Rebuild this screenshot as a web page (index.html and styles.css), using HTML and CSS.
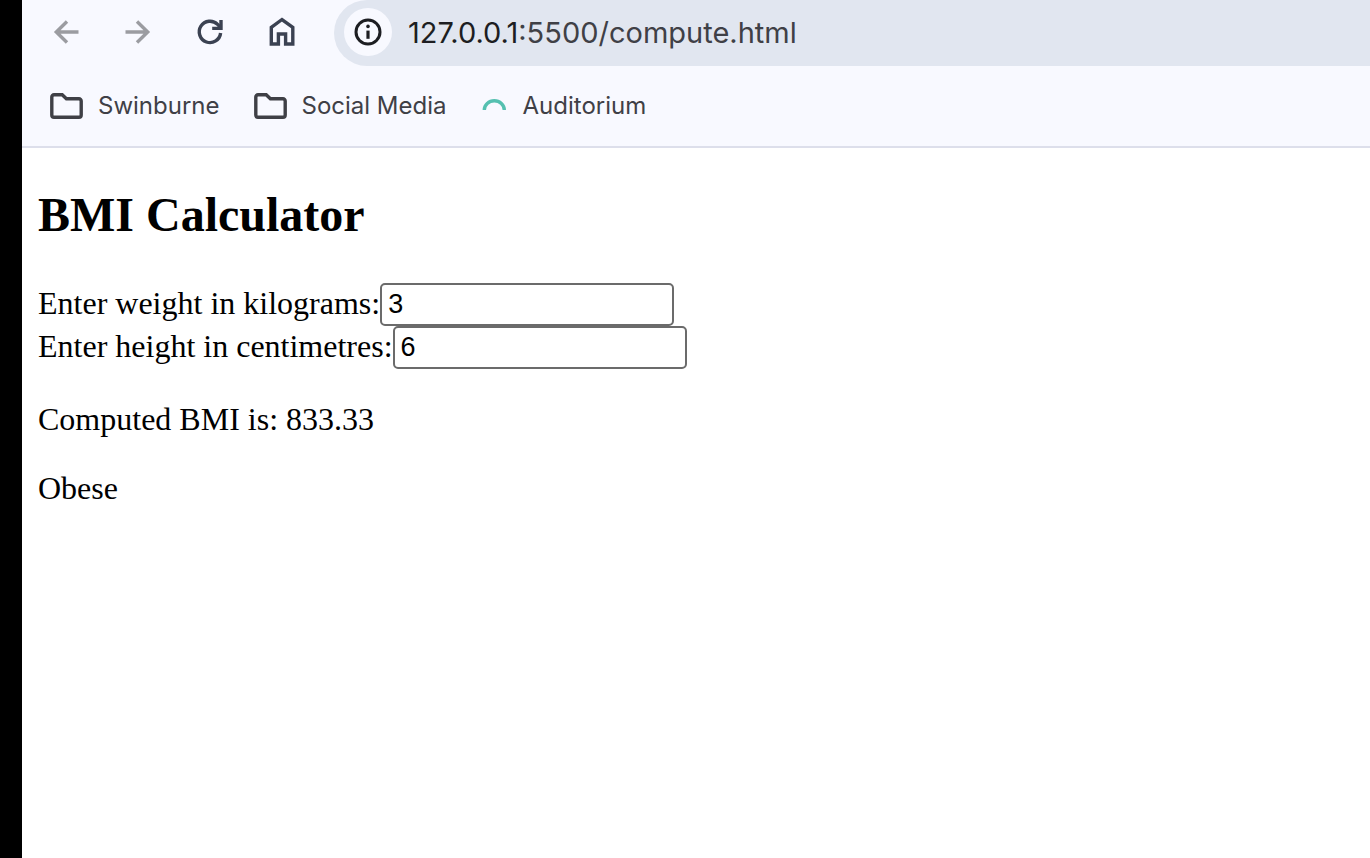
FILE: index.html
```html
<!DOCTYPE html>
<html lang="en">
<head>
<meta charset="utf-8">
<title>BMI Calculator</title>
<link rel="stylesheet" href="styles.css">
</head>
<body>
<div class="window">
  <header class="chrome">
    <div class="toolbar">
      <nav class="nav" aria-label="Browser">
        <button class="nav-button muted" type="button" aria-label="Back">
          <svg viewBox="0 0 32 32"><path d="M28.5 16H6M17 5.5L6.3 16 17 26.5"/></svg>
        </button>
        <button class="nav-button muted" type="button" aria-label="Forward">
          <svg viewBox="0 0 32 32"><path d="M3.5 16H26M15 5.5L25.7 16 15 26.5"/></svg>
        </button>
        <button class="nav-button" type="button" aria-label="Reload">
          <svg viewBox="0 0 32 32"><path d="M26.6 17A10.7 10.7 0 1 1 23.6 8.4L27 12"/><path d="M27 4v8.4H18.2"/></svg>
        </button>
        <button class="nav-button" type="button" aria-label="Home">
          <svg viewBox="0 0 32 32"><path d="M5.3 28V11.3L16 3.5l10.8 7.8V28h-7.2V18h-7.2v10z"/></svg>
        </button>
      </nav>
      <div class="address">
        <button class="site-info" type="button" aria-label="Site information">
          <svg viewBox="0 0 32 32"><circle cx="16" cy="16" r="12" fill="none" stroke="currentColor" stroke-width="3"/><circle cx="16" cy="10.4" r="1.8"/><path d="M14.4 14.6h3.2v8.2h-3.2z"/></svg>
        </button>
        <a class="url" href="#"><span class="host">127.0.0.1</span>:5500/compute.html</a>
      </div>
    </div>
    <nav class="bookmarks" aria-label="Bookmarks">
      <button class="bookmark" type="button">
        <svg class="folder" viewBox="0 0 34 28"><path d="M4 2.7h8.2l4.2 4H29a2.2 2.2 0 0 1 2.2 2.2V23a2.2 2.2 0 0 1-2.2 2.2H4A2.2 2.2 0 0 1 1.8 23V4.9A2.2 2.2 0 0 1 4 2.7z"/></svg>
        <span>Swinburne</span>
      </button>
      <button class="bookmark" type="button">
        <svg class="folder" viewBox="0 0 34 28"><path d="M4 2.7h8.2l4.2 4H29a2.2 2.2 0 0 1 2.2 2.2V23a2.2 2.2 0 0 1-2.2 2.2H4A2.2 2.2 0 0 1 1.8 23V4.9A2.2 2.2 0 0 1 4 2.7z"/></svg>
        <span>Social Media</span>
      </button>
      <a class="bookmark" href="#">
        <svg class="arc" viewBox="0 0 28 24"><path d="M3.3 16a10 9.2 0 0 1 20 0"/></svg>
        <span>Auditorium</span>
      </a>
    </nav>
  </header>
  <main class="page">
    <h1 class="title">BMI Calculator</h1>
    <form class="form">
      <div class="field"><label for="weight">Enter weight in kilograms:</label><input id="weight" type="text" value="3"></div>
      <div class="field"><label for="height">Enter height in centimetres:</label><input id="height" type="text" value="6"></div>
    </form>
    <p class="result">Computed BMI is: 833.33</p>
    <p class="result">Obese</p>
  </main>
</div>
</body>
</html>
```
FILE: styles.css
```css
* {
  box-sizing: border-box;
}

body {
  margin: 0;
  background: #fff;
}

.window {
  min-height: 100vh;
  border-left: 22px solid #000;
}

.chrome {
  background: #f8f9ff;
  border-bottom: 2px solid #dddfeb;
  font-family: Inter, sans-serif;
  color: #3f4046;
}

button {
  padding: 0;
  border: 0;
  background: none;
  font: inherit;
  color: inherit;
}

a {
  color: inherit;
  text-decoration: none;
}

.toolbar {
  display: flex;
  gap: 36px;
  padding-left: 28px;
  height: 66px;
}

.nav {
  display: flex;
  gap: 40px;
  padding-top: 16px;
}

.nav-button {
  width: 32px;
  height: 32px;
  color: #3b4252;
}

.nav-button.muted {
  color: #9b9ca1;
}

.nav-button svg {
  display: block;
  fill: none;
  stroke: currentColor;
  stroke-width: 3.4;
}

.address {
  flex: 1;
  display: flex;
  align-items: center;
  gap: 16px;
  padding: 0 0 2px 10px;
  background: #e1e6f0;
  border-radius: 34px 0 0 34px;
}

.site-info {
  display: grid;
  place-items: center;
  width: 48px;
  height: 48px;
  border-radius: 50%;
  background: #f8f9ff;
  color: #1d1e22;
}

.site-info svg {
  width: 32px;
  fill: currentColor;
}

.url {
  font-size: 29px;
}

.host {
  color: #1d1e22;
}

.bookmarks {
  display: flex;
  align-items: center;
  gap: 34px;
  height: 80px;
  padding-left: 28px;
  font-size: 24px;
}

.bookmark {
  display: flex;
  align-items: center;
  gap: 14px;
}

.bookmark span {
  padding-bottom: 2px;
}

.folder,
.arc {
  fill: none;
  stroke: currentColor;
  stroke-width: 3.4;
}

.folder {
  width: 34px;
}

.arc {
  width: 28px;
  color: #55c0b0;
}

.page {
  padding: 39px 16px;
  font-family: "Liberation Serif", serif;
  font-size: 32px;
  line-height: 37px;
  color: #000;
}

.title {
  margin: 0 0 41px;
  font-size: 48px;
  line-height: 55px;
}

.field {
  display: flex;
  align-items: center;
  height: 43px;
}

.field label {
  padding-bottom: 2px;
}

.field input {
  width: 294px;
  height: 43px;
  padding: 0 6px;
  border: 2px solid #6b6b6b;
  border-radius: 5px;
  font: 27px "Liberation Sans", sans-serif;
}

.result {
  margin: 32px 0;
}
```
